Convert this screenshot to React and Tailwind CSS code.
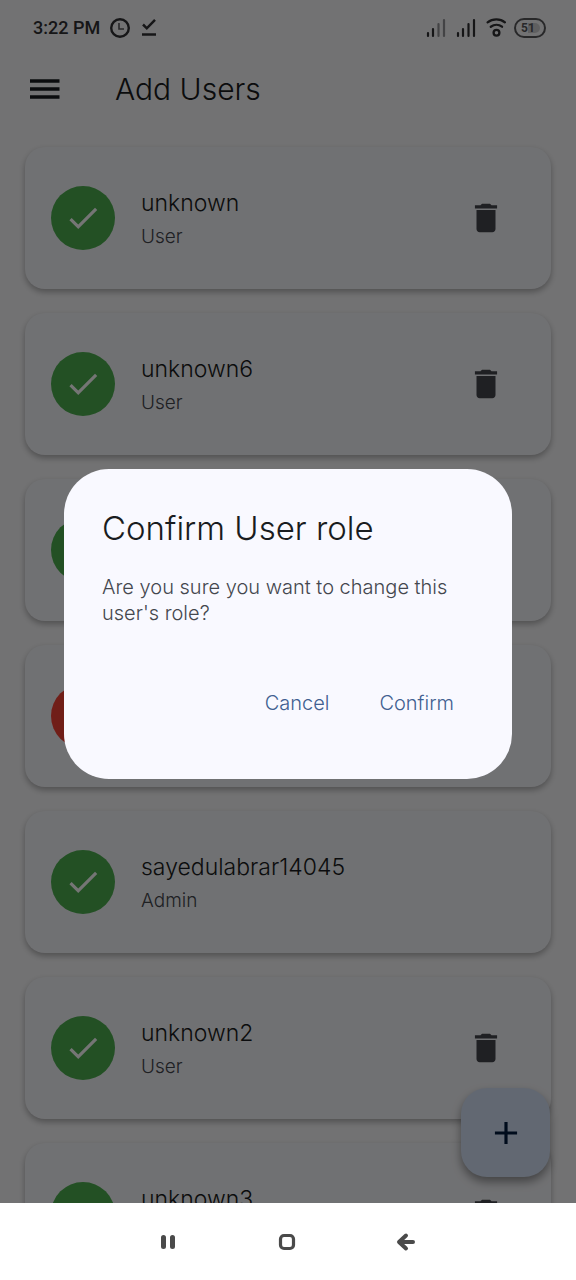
import React from "react";

const users = [
  { id: 1, name: "unknown", role: "User", active: true },
  { id: 2, name: "unknown6", role: "User", active: true },
  { id: 3, active: true },
  { id: 4, active: false },
  { id: 5, name: "sayedulabrar14045", role: "Admin", active: true },
  { id: 6, name: "unknown2", role: "User", active: true },
  { id: 7, name: "unknown3", role: "User", active: true },
];

function Signal({ weak }) {
  return (
    <svg width="20" height="20" viewBox="0 0 20 20" stroke="currentColor" strokeWidth="2.2" strokeLinecap="round" aria-hidden="true">
      <path d="M2 15v3M7 11v7" />
      <path d="M12.500 6v12M18 2v16" opacity={weak ? 0.5 : 1} />
    </svg>
  );
}

function StatusBar() {
  return (
    <div className="flex h-14 shrink-0 items-center pl-[33px] pr-[30px] text-[#303034]">
      <span className="font-[Roboto] text-lg font-medium">3:22 PM</span>
      <svg className="ml-2.5" width="22" height="22" viewBox="0 0 22 22" fill="none" stroke="currentColor" aria-hidden="true">
        <circle cx="10" cy="11" r="8.800" strokeWidth="2.400" />
        <path d="M9 6v6h5" strokeWidth="1.600" opacity="0.8" />
      </svg>
      <svg className="ml-2" width="18" height="20" viewBox="0 0 18 20" fill="none" stroke="currentColor" aria-hidden="true">
        <path d="M3 6.500 6.800 10.300 15 1.800" strokeWidth="2.500" />
        <path d="M2 16.500h14" strokeWidth="2.500" />
      </svg>
      <div className="ml-auto flex items-center gap-2.5">
        <Signal weak />
        <Signal />
        <svg width="20" height="20" viewBox="0 0 20 20" fill="none" stroke="currentColor" strokeWidth="2.300" strokeLinecap="round" aria-hidden="true">
          <path d="M1.600 4.300c5-3.900 12.600-3.900 17.300 0M4.800 8.700c3.400-2.500 8-2.500 11.200 0" />
          <circle cx="10.500" cy="14.800" r="2.900" />
        </svg>
        <div className="relative -ml-0.5 flex h-5 w-8 items-center justify-center rounded-full border-2 border-current opacity-80">
          <span className="absolute right-1 h-2.5 w-3 rounded-r-full bg-black/20" />
          <span className="relative pr-1 font-[Roboto] text-xs font-bold">51</span>
        </div>
      </div>
    </div>
  );
}

function TrashIcon() {
  return (
    <svg width="38" height="38" viewBox="0 0 24 24" fill="#44474e" aria-hidden="true">
      <path d="M6 19c0 1.100.9 2 2 2h8c1.100 0 2-.9 2-2V7H6v12zM19 4h-3.500l-1-1h-5l-1 1H5v2h14V4z" />
    </svg>
  );
}

function UserCard({ user }) {
  return (
    <li className="flex h-[142px] shrink-0 items-center rounded-[20px] bg-[#f5f6fa] pl-[26px] pr-[46px] shadow-[0_3px_6px_rgba(0,0,0,0.3)]">
      <span
        className={
          user.active
            ? "flex size-16 shrink-0 items-center justify-center rounded-full bg-[#4caf50]"
            : "flex size-16 shrink-0 items-center justify-center rounded-full bg-[#f44336]"
        }
      >
        <svg width="38" height="38" viewBox="0 0 24 24" fill="white" aria-hidden="true">
          {user.active ? (
            <path d="M9 16.170 4.830 12l-1.420 1.410L9 19 21 7l-1.410-1.410z" />
          ) : (
            <path d="M19 6.410 17.590 5 12 10.590 6.410 5 5 6.410 10.590 12 5 17.590 6.410 19 12 13.410 17.590 19 19 17.590 13.410 12z" />
          )}
        </svg>
      </span>
      {user.name && (
        <div className="ml-[26px] min-w-0 flex-1 pt-1.5">
          <h2 className="text-[23px] leading-8 text-[#1a1c20]">{user.name}</h2>
          <p className="text-[19px] leading-9 text-[#44474e]">{user.role}</p>
        </div>
      )}
      {user.role === "User" && (
        <button type="button" aria-label={"Delete " + user.name}>
          <TrashIcon />
        </button>
      )}
    </li>
  );
}

function ConfirmDialog() {
  return (
    <div className="absolute inset-0 z-20 flex items-center justify-center bg-black/54 px-16 pt-11">
      <section
        role="dialog"
        aria-modal="true"
        aria-labelledby="dialog-title"
        className="w-full max-w-[560px] rounded-[45px] bg-[#f9f9ff] px-[38px] pb-11 pt-[37px]"
      >
        <h2 id="dialog-title" className="text-[33px] leading-[44px] text-[#191c20]">
          Confirm User role
        </h2>
        <p className="mt-6 text-xl leading-[26px] text-[#44474e]">
          Are you sure you want to change this user's role?
        </p>
        <div className="mt-[45px] flex justify-end gap-2.5 text-xl text-[#415f91]">
          <button type="button" className="h-16 px-5">Cancel</button>
          <button type="button" className="h-16 px-5">Confirm</button>
        </div>
      </section>
    </div>
  );
}

function NavigationBar() {
  return (
    <nav className="flex h-[77px] shrink-0 items-center justify-center gap-[95px] bg-white pr-0.5 text-[#4a4a4a]">
      <button type="button" aria-label="Recent apps">
        <svg width="24" height="24" viewBox="0 0 24 24" stroke="currentColor" strokeWidth="5" strokeLinecap="round">
          <path d="M7.500 7.500v9M16.500 7.500v9" />
        </svg>
      </button>
      <button type="button" aria-label="Home">
        <svg width="24" height="24" viewBox="0 0 24 24" fill="none" stroke="currentColor" strokeWidth="3.200">
          <rect x="5.500" y="5.500" width="13" height="13" rx="3.500" />
        </svg>
      </button>
      <button type="button" aria-label="Back">
        <svg width="24" height="24" viewBox="0 0 24 24" fill="none" stroke="currentColor" strokeWidth="4" strokeLinecap="round" strokeLinejoin="round">
          <path d="M12 5.500 5 12l7 6.500M5.500 12H19" />
        </svg>
      </button>
    </nav>
  );
}

export default function App() {
  return (
    <div className="flex h-screen flex-col overflow-hidden font-[Inter,sans-serif] font-light">
      <main className="relative flex min-h-0 flex-1 flex-col overflow-hidden bg-[#f9f9fb]">
        <StatusBar />
        <header className="flex h-[66px] shrink-0 items-center px-[26px]">
          <button type="button" aria-label="Open menu">
            <svg width="38" height="38" viewBox="0 0 38 38" stroke="#191c20" strokeWidth="3.500" aria-hidden="true">
              <path d="M4 11h29.500M4 19h29.500M4 27h29.500" />
            </svg>
          </button>
          <h1 className="ml-[51px] text-[30px] leading-10 text-[#191c20]">Add Users</h1>
        </header>
        <ul className="flex min-h-0 flex-1 flex-col gap-6 overflow-hidden px-[25px] pt-[25px]">
          {users.map((user) => (
            <UserCard key={user.id} user={user} />
          ))}
        </ul>
        <button
          type="button"
          aria-label="Add user"
          className="absolute bottom-[26px] right-[26px] z-10 flex size-[89px] items-center justify-center rounded-[26px] bg-[#d6e3f8] shadow-[0_5px_10px_rgba(0,0,0,0.4)]"
        >
          <svg width="38" height="38" viewBox="0 0 24 24" stroke="#001b3e" strokeWidth="2" aria-hidden="true">
            <path d="M12 5v14M5 12h14" />
          </svg>
        </button>
        <ConfirmDialog />
      </main>
      <NavigationBar />
    </div>
  );
}
